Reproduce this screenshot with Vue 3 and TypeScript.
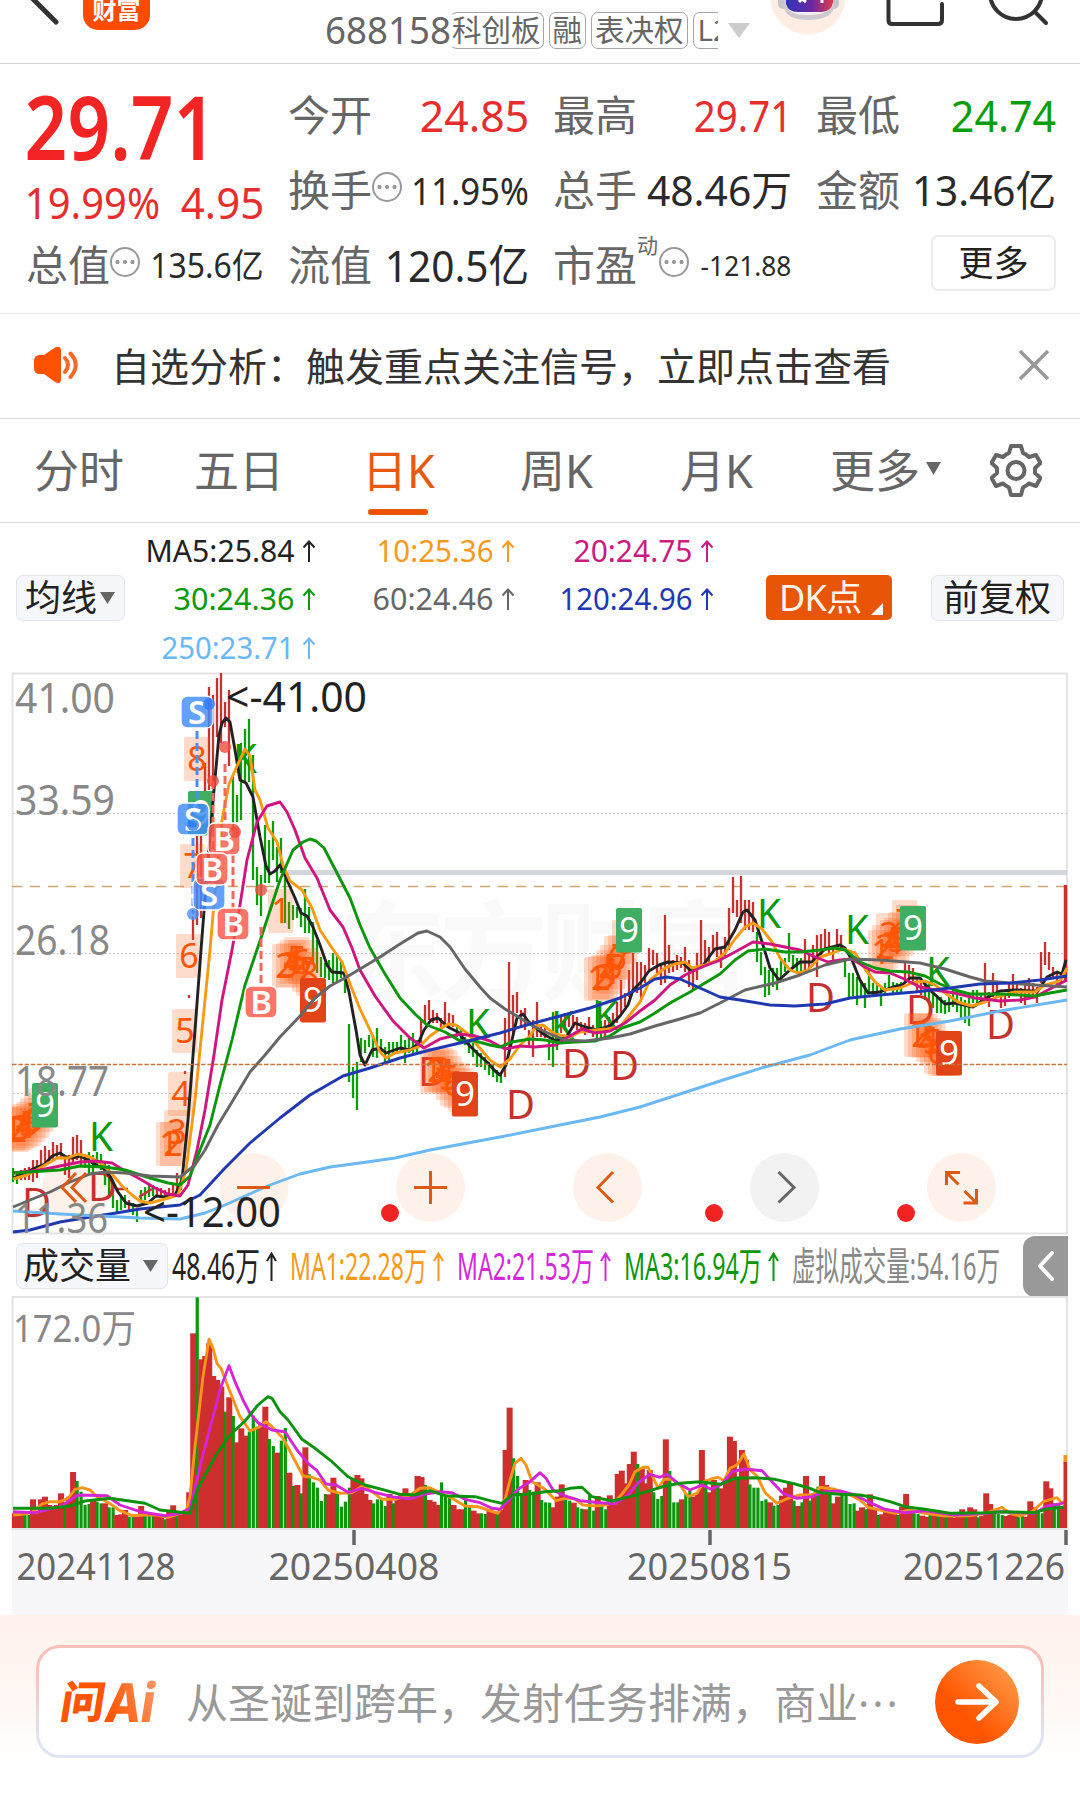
<script setup lang="ts">
import { h, type FunctionalComponent } from 'vue'

interface FitProps { t: string; s: number; w: number }

/* Single line of text condensed to a given ink width */
const Fit: FunctionalComponent<FitProps> = (p) =>
  h('svg', { width: p.w, height: p.s, style: 'overflow:visible;flex:none;display:block' }, [
    h('text', {
      x: -0.05 * p.s, y: 0.857 * p.s, 'font-size': p.s, fill: 'currentColor',
      textLength: p.w + 0.1 * p.s, lengthAdjust: 'spacingAndGlyphs',
    }, p.t),
  ])
Fit.props = ['t', 's', 'w']

const tabs = [
  { t: '分时' }, { t: '五日' }, { t: '日K', on: true },
  { t: '周K' }, { t: '月K' }, { t: '更多', menu: true },
]

const averages = [
  { t: 'MA5:25.84', w: 146, c: '#222' }, { t: '10:25.36', w: 114, c: '#f59a1c' }, { t: '20:24.75', w: 116, c: '#cb1a80' },
  { t: '30:24.36', w: 118, c: '#0a9a0a' }, { t: '60:24.46', w: 118, c: '#666' }, { t: '120:24.96', w: 130, c: '#2038b4' },
  { t: '250:23.71', w: 130, c: '#6bb8f5' },
]

const PITCH = 4.005
const X0 = 13

/* direction, high, low */
const candleData =
  'g1168-1182 g1171-1184 r1170-1180 r1168-1180 r1167-1180 r1160-1182 r1160-1178 r1150-1170 r1146-1165 r1150-1162 r1142-1160 r1145-1158 r1143-1158 r1155-1175 r1155-1178 r1137-1165 r1135-1160 r1140-1165 g1155-1168 g1152-1175 g1155-1175 g1152-1165 g1154-1170 g1162-1185 g1165-1196 g1190-1208 g1200-1212 g1197-1210 g1195-1208 r1200-1212 g1203-1215 g1210-1222 g1190-1200 g1187-1200 g1185-1197 g1185-1196 r1187-1197 r1188-1198 r1190-1198 r1188-1196 r1185-1195 r1173-1190 g1176-1190 r1071-1074 r995-998 r917-940 r827-925 r835-918 r763-810 r687-790 r695-787 r678-737 r673-743 r702-727 r690-766 g777-830 g795-822 g743-820 g729-782 g719-782 g755-880 g867-905 g875-916 g825-883 g840-883 g821-860 g847-882 g838-873 g878-923 g902-929 g905-920 g907-918 g908-927 g889-933 g907-933 g922-963 g940-973 g957-977 g963-978 g960-980 g953-983 g955-982 g962-978 g973-993 g1024-1082 g1067-1098 g1062-1110 g1038-1062 g1040-1053 g1035-1047 g1035-1057 g1028-1058 g1039-1053 g1047-1063 g1042-1060 g1042-1054 g1042-1053 g1035-1053 g1040-1063 g1038-1053 g1033-1053 g1040-1052 r1020-1043 r1005-1023 r1000-1020 r1010-1023 r1013-1023 r1018-1028 r1002-1025 r1013-1027 r1015-1027 g1027-1037 g1028-1040 g1037-1045 g1040-1053 g1043-1057 g1050-1067 g1053-1067 g1057-1070 g1062-1075 g1065-1077 g1070-1082 g1073-1083 r1018-1077 r962-1047 r995-1033 r992-1013 r1010-1027 r1008-1030 r1030-1047 r1020-1057 r1002-1037 r1025-1037 r1027-1038 g1040-1060 g1012-1067 g1037-1050 r1017-1033 r1013-1030 r1013-1027 r1015-1028 r1017-1030 r1022-1033 r1023-1035 r1017-1033 r1025-1037 g1000-1040 g1021-1040 r1020-1037 r1017-1030 r1013-1027 r1002-1023 r980-1013 r993-1007 r970-997 r953-993 r962-993 r962-1002 r965-983 r948-970 r950-965 r953-973 r963-985 r915-983 r945-973 r960-972 r955-970 r957-968 r947-972 r960-987 r968-990 r953-980 r920-967 r940-965 r947-963 r935-953 r932-957 r948-968 r937-958 r908-950 r877-913 r900-917 r876-923 r900-930 r900-930 r902-932 g932-962 g952-975 g967-997 g970-995 g968-987 g968-990 g960-980 g958-972 g933-962 g955-967 g958-972 g958-973 r939-970 r955-968 r945-963 r935-977 r934-957 r929-950 r932-953 r947-963 r929-950 r935-950 g958-977 g973-997 g973-996 g977-1005 g982-997 g983-1008 g968-993 g983-995 g985-995 g988-1006 g983-995 g975-990 g982-993 g983-992 g982-993 r963-983 r965-980 r968-983 r977-993 r980-995 g983-1000 g982-1003 g992-1008 g995-1013 g997-1013 g1000-1014 g997-1012 g990-1007 g993-1012 g997-1018 g1000-1023 g998-1026 g990-1003 g990-1003 g993-1003 r963-1000 r992-1007 r973-997 r982-997 r993-1008 r993-1006 r983-998 r974-995 r983-995 r988-1003 r983-1005 r978-998 r983-998 r987-1003 r952-983 r942-965 r952-970 r967-978 r972-987 r973-983'
const candles = candleData.split(' ').map((d, i) => {
  const [hi, lo] = d.slice(1).split('-').map(Number)
  return { up: d[0] === 'r', x: X0 + i * 4, hi, lo }
})

/* direction, distance of the bar top in thirds of a pixel */
const volumeData =
  'r850 r850 r850 g855 g855 r808 r850 r808 r800 r825 r830 r825 r790 g820 r800 r726 g753 g785 g825 g822 r812 g815 g820 r820 g832 g832 r855 r853 r840 g860 g858 r855 r828 g850 g853 g855 r858 r860 g868 r840 r826 g850 r850 r845 r787 r310 g202 r388 r378 r340 r438 r450 r470 g545 r502 g558 r637 r595 r617 g605 g557 g590 r580 r530 g627 g648 r668 g632 g594 r728 g768 r765 g790 r652 g733 g757 g773 g813 g792 r793 r743 g792 g830 g815 g773 r745 r735 r745 r792 r810 g820 g808 g806 g828 r792 g820 r800 r795 r775 r795 r795 r738 r741 g765 r810 r815 r825 g757 g800 g800 r825 r838 r838 g805 g828 r842 r850 g850 g852 r838 r845 g850 r840 r660 r533 g685 g738 g790 r750 g780 g785 r757 g810 g817 g818 r832 r800 r763 g808 g812 r818 g832 g836 r838 g793 g842 r798 g820 g838 r796 r815 r732 r722 r760 r702 r665 g702 r715 r760 r720 g787 g807 g798 r628 g723 g817 g817 r808 g790 g783 r800 r790 r660 g750 r787 r750 g760 r775 r750 r620 r633 g740 r660 r690 g763 g773 g773 g813 g808 r817 g827 g825 r797 r773 r757 g812 r828 g817 r738 g812 r790 g770 r738 r765 g790 r820 r800 g795 g797 g822 g820 r842 r832 g838 r793 r838 g855 r853 r845 r845 r850 g855 r830 r792 r847 g850 g852 r857 r860 g855 r855 g858 r858 g860 r855 r863 r858 r838 g860 r832 r838 g862 r858 r790 r822 g845 g852 g855 r858 r855 r856 g852 g858 r860 r814 r832 g845 g850 r754 r775 g820 g825 r830 r845'
const volumes = volumeData.split(' ').slice(0, 263).map((d, i) => {
  const top = Number(d.slice(1)) / 3
  const up = d[0] === 'r'
  return { up, x: X0 + i * PITCH - (up ? 3 : 1.6), w: up ? 6 : 3.2, y: top, hgt: 298 - top }
})

const priceLines = [
  { c: '#222', p: '13,1178 25,1173 35,1168 45,1164 52,1156 60,1153 66,1157 72,1158 80,1156 88,1160 96,1165 103,1168 110,1176 118,1192 126,1203 137,1206 148,1203 156,1196 165,1197 175,1195 182,1180 188,1120 195,1030 201,950 208,860 214,790 219,735 222,723 226,718 230,722 235,750 240,780 246,783 253,797 260,837 266,866 270,874 275,871 280,865 287,880 295,898 301,913 307,916 313,927 320,945 327,965 332,972 344,973 349,992 356,1030 360,1055 365,1065 372,1050 380,1048 386,1053 400,1048 410,1050 418,1044 424,1030 431,1020 438,1018 448,1027 458,1032 467,1043 477,1053 487,1062 495,1071 500,1075 506,1065 512,1040 517,1018 523,1014 528,1021 537,1029 545,1035 556,1041 567,1036 575,1023 585,1027 597,1030 610,1026 620,1016 628,1005 633,990 641,982 649,971 659,965 668,962 683,963 690,970 702,967 709,957 715,949 725,947 735,930 743,912 747,910 755,920 763,945 770,968 779,980 790,970 800,962 812,962 825,949 840,945 845,948 852,960 860,980 868,993 880,992 893,987 902,985 910,978 920,978 930,990 945,1004 955,1003 973,1007 988,997 1000,991 1015,990 1030,991 1038,991 1047,977 1057,972 1062,974 1066,960' },
  { c: '#f79a14', p: '13,1179 27,1175 40,1168 57,1158 68,1158 78,1154 90,1157 102,1164 112,1174 122,1186 132,1195 140,1201 150,1203 165,1199 178,1195 186,1170 195,1100 203,1020 210,950 216,880 222,820 229,784 237,766 245,749 250,756 255,790 260,800 268,828 277,842 283,865 290,881 302,890 312,908 320,930 332,948 342,962 350,984 360,1009 370,1030 380,1052 386,1058 395,1053 410,1050 420,1046 430,1036 440,1029 448,1024 456,1025 468,1034 478,1046 490,1060 500,1067 510,1059 520,1045 530,1036 536,1026 543,1025 548,1029 555,1034 570,1037 580,1032 595,1030 607,1029 620,1027 628,1017 640,1002 650,980 665,968 675,964 685,962 692,968 705,965 715,961 725,953 735,939 745,927 753,923 762,929 772,942 780,958 790,970 798,973 807,971 820,957 833,953 843,949 855,953 865,969 875,982 885,990 900,988 912,983 925,981 935,985 945,993 958,1002 972,1006 985,1002 1000,996 1015,992 1035,992 1045,985 1060,981 1067,968' },
  { c: '#cf1580', p: '13,1173 40,1170 60,1166 80,1162 95,1161 112,1163 125,1171 140,1179 155,1188 168,1194 180,1196 188,1185 197,1150 205,1110 214,1055 222,1000 232,950 240,905 247,860 257,822 267,806 280,802 287,812 295,830 305,858 317,878 330,910 343,927 352,948 360,970 375,996 393,1021 410,1038 424,1048 440,1039 460,1034 475,1036 490,1041 505,1049 520,1046 535,1047 556,1045 568,1037 582,1029 595,1033 610,1031 625,1023 640,1011 655,1000 670,985 685,975 702,967 718,961 735,952 753,942 770,944 785,947 800,950 815,957 828,962 840,960 852,959 865,967 875,972 890,973 902,978 920,987 935,990 955,993 975,998 1000,1001 1020,1000 1035,997 1048,990 1067,980' },
  { c: '#0a960a', p: '13,1173 60,1170 80,1166 105,1167 125,1170 150,1178 168,1183 180,1185 190,1176 200,1150 210,1125 220,1085 232,1040 245,985 262,935 280,880 293,850 303,842 310,839 316,841 324,848 337,873 350,898 360,925 370,948 385,974 400,998 415,1014 427,1025 445,1032 460,1041 475,1041 490,1045 500,1047 512,1042 530,1039 545,1040 560,1043 575,1042 595,1041 610,1036 622,1028 640,1022 655,1013 670,1003 690,992 705,983 720,974 735,960 748,951 765,949 785,952 800,952 820,950 835,948 845,950 860,962 875,968 890,971 908,972 925,976 940,984 955,990 970,994 1000,994 1035,996 1050,993 1067,990' },
  { c: '#666', p: '13,1207 30,1200 50,1192 70,1182 90,1174 105,1172 125,1173 150,1176 180,1177 195,1165 205,1150 218,1125 232,1102 250,1072 265,1055 280,1037 300,1016 315,998 330,986 345,978 360,969 380,957 400,944 418,933 427,931 440,937 450,947 465,969 480,987 490,998 505,1009 520,1018 535,1027 550,1034 565,1040 585,1041 610,1038 630,1034 655,1026 680,1019 700,1013 720,1003 745,990 775,983 800,975 825,965 850,959 880,960 920,963 945,969 970,977 985,981 1010,983 1035,985 1067,987' },
  { c: '#2038b0', p: '13,1232 30,1230 60,1222 90,1217 110,1214 140,1209 180,1205 200,1195 225,1168 250,1143 280,1118 310,1095 343,1076 370,1068 400,1058 430,1050 460,1043 500,1033 530,1024 560,1016 590,1008 620,998 640,988 655,979 667,977 680,979 700,988 720,997 740,1000 770,1005 795,1006 825,1004 850,998 880,995 915,992 950,988 980,984 1010,983 1040,980 1067,976' },
  { c: '#6bb8f3', p: '13,1211 60,1214 100,1216 140,1218 180,1219 205,1213 225,1205 245,1196 270,1185 300,1174 330,1167 360,1163 395,1158 430,1150 500,1137 560,1125 600,1117 640,1107 680,1094 720,1081 765,1067 810,1055 850,1040 900,1029 950,1021 1000,1011 1067,1000' },
]

const thirds = (p: string) =>
  p.split(' ').map((q) => {
    const [x, y] = q.split(',').map(Number)
    return `${x},${(y / 3).toFixed(1)}`
  }).join(' ')

const volumeLines = [
  { c: '#f7941a', p: thirds('13,855 25,852 33,845 42,822 50,815 60,815 68,805 75,778 82,773 90,780 97,800 105,812 112,825 120,842 132,857 145,855 157,855 168,862 178,852 186,845 190,800 195,650 203,440 209,328 213,355 217,400 221,415 228,470 234,515 240,560 250,603 260,590 266,575 272,590 283,625 292,675 303,738 312,742 320,750 328,780 340,790 352,788 364,765 372,785 382,808 395,808 410,795 420,775 430,773 440,788 452,805 465,828 478,830 488,840 498,850 504,820 510,750 515,700 521,685 526,705 532,755 538,765 545,778 556,812 565,805 574,805 583,825 595,828 605,825 614,818 622,792 629,765 635,725 643,712 648,712 652,735 658,775 664,748 672,748 680,765 688,800 697,790 704,755 713,745 718,742 724,752 730,715 737,705 744,672 750,720 757,738 765,788 777,820 788,805 800,795 813,795 820,772 835,778 850,795 860,810 868,832 880,840 895,850 910,840 925,850 945,858 970,857 985,850 1002,832 1010,850 1020,858 1032,845 1043,815 1057,803 1062,820 1066,815') },
  { c: '#d426d4', p: thirds('13,845 35,848 60,830 78,795 107,797 120,825 140,845 165,857 180,850 190,835 196,760 205,650 213,560 221,470 229,407 235,455 243,510 250,550 258,578 272,600 285,605 297,660 308,700 317,722 326,762 336,765 348,787 362,775 375,787 395,802 410,806 425,792 440,785 452,788 465,808 480,818 492,835 500,838 508,812 518,778 530,755 540,728 546,745 553,780 565,798 580,812 600,818 615,822 628,795 638,758 650,733 660,742 667,732 677,758 690,780 702,765 711,778 722,762 732,725 745,717 762,722 772,755 783,790 797,805 812,800 825,785 840,783 855,795 870,818 885,838 905,848 925,842 955,855 985,850 1000,845 1035,850 1047,828 1060,822 1066,815') },
  { c: '#0c920c', p: thirds('13,835 50,835 70,828 85,813 110,805 145,820 160,840 190,850 196,790 205,735 217,670 230,615 245,573 258,525 268,500 272,505 280,545 288,570 302,628 315,655 332,695 348,740 365,765 382,778 400,793 415,795 430,782 445,797 475,800 490,812 502,820 512,795 530,792 545,785 560,782 570,775 582,772 592,800 612,813 630,800 650,782 665,768 680,760 700,755 720,763 735,745 755,743 775,748 795,762 810,775 820,788 840,793 860,795 875,803 890,815 905,830 925,838 950,850 985,848 1005,845 1035,848 1045,838 1066,830') },
]

/* x, y of the nine-turn counters */
const counts: { n: number; x: number; y: number }[] = []
const runs: { x: number; ys: number[] }[] = [
  { x: 0, ys: [1107, 1108, 1106, 1104, 1102, 1098, 1094, 1088] },
  { x: 156, ys: [1122, 1122, 1110, 1072, 1009, 934, 844, 737] },
  { x: 268, ys: [889, 944, 943, 940, 937, 940, 948, 952] },
  { x: 420, ys: [1050, 1048, 1048, 1050, 1056, 1062, 1064, 1068] },
  { x: 584, ys: [957, 956, 955, 950, 945, 936, 935, 920] },
  { x: 868, ys: [930, 925, 913, 920, 918, 912, 900, 905] },
  { x: 904, ys: [1013, 1013, 1014, 1018, 1020, 1030, 1032, 1032] },
]
for (const r of runs) r.ys.forEach((y, i) => counts.push({ n: i + 1, x: r.x + i * 4, y }))

const nines = [
  { x: 32, y: 1083, c: '#3fae63' }, { x: 188, y: 791, c: '#3fae63' }, { x: 300, y: 978, c: '#e24417' },
  { x: 452, y: 1072, c: '#e24417' }, { x: 616, y: 908, c: '#3fae63' }, { x: 900, y: 906, c: '#3fae63' },
  { x: 936, y: 1031, c: '#e24417' },
]

const kd = [
  ['K', 89, 1151], ['K', 233, 773], ['K', 466, 1038], ['K', 551, 1040], ['K', 594, 1030], ['K', 757, 928],
  ['K', 845, 944], ['K', 926, 986], ['D', 22, 1217], ['D', 88, 1201], ['D', 418, 1086], ['D', 562, 1078],
  ['D', 610, 1080], ['D', 506, 1119], ['D', 806, 1012], ['D', 906, 1024], ['D', 986, 1039],
] as [string, number, number][]

const trades = [
  { t: 'S', x: 181, y: 696 }, { t: 'S', x: 177, y: 803 }, { t: 'S', x: 193, y: 878 },
  { t: 'B', x: 208, y: 823 }, { t: 'B', x: 196, y: 853 }, { t: 'B', x: 217, y: 908 }, { t: 'B', x: 245, y: 986 },
]
const links = [
  { x: 197, a: 731, b: 803, c: '#4c8df5' }, { x: 193, a: 838, b: 914, c: '#4c8df5' },
  { x: 225, a: 764, b: 823, c: '#f4685a' }, { x: 213, a: 781, b: 852, c: '#f4685a' },
  { x: 233, a: 855, b: 908, c: '#f4685a' }, { x: 261, a: 927, b: 986, c: '#f4685a' },
]
const dots = [
  { x: 209, y: 704, c: '#2f7df6' }, { x: 193, y: 825, c: '#2f7df6' }, { x: 193, y: 914, c: '#4c8df5' },
  { x: 225, y: 747, c: '#f04a3c' }, { x: 213, y: 781, c: '#f04a3c' }, { x: 261, y: 890, c: '#f04a3c' },
  { x: 235, y: 832, c: '#f04a3c' },
]

const scale = [
  { t: '41.00', y: 713, w: 97 }, { t: '33.59', y: 815, w: 97 }, { t: '26.18', y: 955, w: 92 },
  { t: '18.77', y: 1095.5, w: 91 }, { t: '11.36', y: 1232.5, w: 90 },
]
</script>

<template>
  <main class="page">
    <header class="top">
      <svg class="back" width="60" height="30" viewBox="0 0 60 30"><path d="M28-6 L56 22" stroke="#333" stroke-width="5" stroke-linecap="round" /></svg>
      <div class="brand">财富</div>
      <div class="code"><Fit t="688158" :s="38" :w="122" /></div>
      <div class="tags">
        <span class="tag first">科创板</span><span class="tag">融</span><span class="tag">表决权</span><span class="tag cut">L2</span>
      </div>
      <svg class="caret" width="22" height="15" viewBox="0 0 22 15"><path d="M0 0H22L11 15Z" fill="#ccc" /></svg>
      <svg class="robot" width="76" height="36" viewBox="0 0 76 36">
        <circle cx="38" cy="-3" r="37.5" fill="#ffede4" />
        <rect x="8" y="-8" width="12" height="17" rx="5" fill="#c9c4cc" />
        <rect x="57" y="-8" width="12" height="17" rx="5" fill="#c9c4cc" />
        <path d="M14-6V8Q17 20 38 20Q60 20 64 8V-6Z" fill="#cdc9ce" />
        <path d="M16-6V5Q18 15 38 15Q58 15 63 5V-6Z" fill="#f3eff2" />
        <defs><linearGradient id="visor" x1="0" x2="1"><stop offset="0" stop-color="#2f35b9" /><stop offset=".55" stop-color="#6a2aa0" /><stop offset="1" stop-color="#e23a4c" /></linearGradient></defs>
        <path d="M16-8V4Q18 12 28 12H52Q62 11 63 2V-8Z" fill="url(#visor)" />
        <path d="M29 2L32-1L36 2M52-2V3" stroke="#fff" stroke-width="3" fill="none" />
      </svg>
      <svg class="share" width="60" height="28" viewBox="0 0 60 28"><path d="M2.500-4V20Q2.500 24 6 24H52Q56 24 56 20V4" fill="none" stroke="#333" stroke-width="4" stroke-linecap="round" /><path d="M29-4V0" stroke="#777" stroke-width="3" /></svg>
      <svg class="search" width="60" height="28" viewBox="0 0 60 28"><circle cx="27" cy="-7" r="26" fill="none" stroke="#333" stroke-width="4" /><path d="M46 12L57 23" stroke="#333" stroke-width="4" stroke-linecap="round" /></svg>
    </header>

    <section class="quote">
      <div class="price">
        <div class="last"><Fit t="29.71" :s="88" :w="183" /></div>
        <div class="delta"><Fit t="19.99%" :s="43" :w="131" /><Fit t="4.95" :s="43" :w="79" /></div>
      </div>
      <div class="cell"><span>今开</span><Fit class="up" t="24.85" :s="44" :w="105" /></div>
      <div class="cell"><span>最高</span><Fit class="up" t="29.71" :s="44" :w="94" /></div>
      <div class="cell"><span>最低</span><Fit class="down" t="24.74" :s="44" :w="101" /></div>
      <div class="cell"><span>换手</span><i class="info"></i><Fit class="val" t="11.95%" :s="38" :w="114" /></div>
      <div class="cell"><span>总手</span><Fit class="val" t="48.46万" :s="42" :w="141" /></div>
      <div class="cell"><span>金额</span><Fit class="val" t="13.46亿" :s="42" :w="140" /></div>
      <div class="cell"><span>总值</span><i class="info"></i><Fit class="val" t="135.6亿" :s="34" :w="110" /></div>
      <div class="cell"><span>流值</span><Fit class="val" t="120.5亿" :s="44" :w="140" /></div>
      <div class="cell"><span>市盈</span><sup>动</sup><i class="info"></i><Fit class="val" t="-121.88" :s="28" :w="88" /></div>
      <div class="cell"><button class="more">更多</button></div>
    </section>

    <section class="notice">
      <svg width="46" height="38" viewBox="0 0 46 38">
        <path d="M1 15Q1 9 7 9H11L22 1.500Q28-1 28 5V33Q28 39 22 36L11 28H7Q1 28 1 22Z" fill="#ff5200" />
        <path d="M32 12Q38 18.500 32 26M37.500 7.500Q48 18.500 37.500 31" fill="none" stroke="#f96a28" stroke-width="4" stroke-linecap="round" />
      </svg>
      <p>自选分析：触发重点关注信号，立即点击查看</p>
      <svg width="32" height="32" viewBox="0 0 32 32"><path d="M2 2L30 30M30 2L2 30" stroke="#999" stroke-width="3.500" /></svg>
    </section>

    <nav class="tabs">
      <div v-for="t in tabs" :key="t.t" class="tab" :class="{ on: t.on, menu: t.menu }">
        {{ t.t }}<svg v-if="t.menu" width="15" height="13" viewBox="0 0 15 13"><path d="M0 0H15L7.500 13Z" fill="#666" /></svg>
      </div>
      <svg class="gear" width="52" height="54" viewBox="-26 -27 52 54">
        <path d="M-5-24H5L7-17Q10-16 13-13L20-15L24.500-7L19-2Q19 0 19 3L24.500 8L20 16L13 13.500Q10 16 7 17.500L5 25H-5L-7 17.500Q-10 16 -13 13.500L-20 16L-24.500 8L-19 3Q-19 0 -19-2L-24.500-7L-20-15L-13-13Q-10-16 -7-17Z" fill="none" stroke="#666" stroke-width="4" stroke-linejoin="round" />
        <circle cx="0" cy="0.500" r="8.500" fill="none" stroke="#666" stroke-width="4" />
      </svg>
    </nav>

    <section class="averages">
      <button class="chip">均线<svg width="15" height="12" viewBox="0 0 15 12"><path d="M0 0H15L7.500 12Z" fill="#666" /></svg></button>
      <div class="ma-grid">
        <div v-for="a in averages" :key="a.t" class="ma" :style="{ color: a.c }">
          <Fit :t="a.t" :s="30" :w="a.w" />
          <svg width="12" height="22" viewBox="0 0 12 22"><path d="M6 22V2M0.500 7.500L6 1.500L11.500 7.500" fill="none" stroke="currentColor" stroke-width="2" /></svg>
        </div>
      </div>
      <button class="dk">DK点<i></i></button>
      <button class="chip restore">前复权</button>
    </section>

    <svg class="kline" width="1080" height="564" viewBox="0 672 1080 564">
      <defs><clipPath id="plot"><rect x="12" y="672" width="1056" height="563" /></clipPath></defs>
      <text class="mark" x="338" y="992" textLength="412">东方财富</text>
      <g fill="none">
        <rect x="12.500" y="673.500" width="1054.500" height="560" stroke="#e3e3e3" stroke-width="2" />
        <path d="M13 813.500H1067M13 953.500H1067M13 1093.500H1067" stroke="#ccc" stroke-width="1" stroke-dasharray="2 2" />
      </g>
      <path d="M288 872.500H1067" stroke="#d3d7db" stroke-width="5" />
      <path d="M12 886.500H1067" stroke="#cfa46e" stroke-width="1.500" stroke-dasharray="10 8" />
      <g>
        <circle v-for="x in [77, 254, 430.500, 607.500, 961.500]" :key="x" :cx="x" cy="1187.500" r="34.500" fill="#fef1ea" />
        <circle cx="784.500" cy="1187.500" r="34.500" fill="#f2f2f2" />
      </g>
      <g clip-path="url(#plot)">
        <path v-for="c in candles" :key="c.x" :d="`M${c.x} ${c.hi}V${c.lo}`" :stroke="c.up ? '#c93030' : '#0a9e0a'" stroke-width="2.300" />
        <path d="M1065.500 885V980" stroke="#c93030" stroke-width="3.500" />
        <path d="M118 1189H128M139 1197L152 1189" stroke="#c93030" stroke-width="2.500" />
        <g class="kd">
          <text v-for="(k, i) in kd" :key="i" :x="k[1]" :y="k[2]" :textLength="k[0] === 'K' ? 24 : 29" lengthAdjust="spacingAndGlyphs" :fill="k[0] === 'K' ? '#0a9a0a' : '#c53030'">{{ k[0] }}</text>
        </g>
        <g class="cnt">
          <template v-for="(c, i) in counts" :key="i">
            <rect :x="c.x" :y="c.y" width="25.500" height="44" rx="2" fill="#ff5a10" fill-opacity=".22" />
            <text :x="c.x + 13" :y="c.y + 34">{{ c.n }}</text>
          </template>
        </g>
        <g class="nine">
          <template v-for="n in nines" :key="n.x">
            <rect :x="n.x" :y="n.y" width="26" height="44.500" rx="2" :fill="n.c" />
            <text :x="n.x + 13" :y="n.y + 34">9</text>
          </template>
        </g>
        <polyline v-for="l in priceLines" :key="l.c" :points="l.p" fill="none" :stroke="l.c" stroke-width="2.900" stroke-linejoin="round" />
        <path d="M12 1064.500H1067" stroke="#c9733f" stroke-width="1.500" stroke-dasharray="4.500 1.800" />
        <path v-for="k in links" :key="k.x + k.c" :d="`M${k.x} ${k.a}V${k.b}`" :stroke="k.c" stroke-width="3" stroke-dasharray="8 4" />
        <g class="trade">
          <template v-for="b in trades" :key="b.x">
            <rect :x="b.x" :y="b.y" width="32" height="32" rx="6.500" :fill="b.t === 'S' ? '#3f8cff' : '#fb5748'" fill-opacity=".82" stroke="#fff" stroke-width="1.300" />
            <text :x="b.x + 16" :y="b.y + 27.500">{{ b.t }}</text>
          </template>
        </g>
        <circle v-for="(d, i) in dots" :key="i" :cx="d.x" :cy="d.y" r="6" :fill="d.c" fill-opacity=".8" />
      </g>
      <g class="scale">
        <text v-for="s in scale" :key="s.t" x="15" :y="s.y" :textLength="s.w + 3" lengthAdjust="spacingAndGlyphs">{{ s.t }}</text>
      </g>
      <g class="peak">
        <text x="226" y="711.500" textLength="141" lengthAdjust="spacingAndGlyphs">&lt;-41.00</text>
        <text x="143" y="1227" textLength="138" lengthAdjust="spacingAndGlyphs">&lt;-12.00</text>
      </g>
      <circle v-for="x in [390, 714, 906]" :key="x" :cx="x" cy="1213" r="9" fill="#f02323" />
      <g fill="none" stroke="#dc5a12" stroke-width="3">
        <path d="M76 1173L62 1187.500L76 1202M86 1173L72 1187.500L86 1202" />
        <path d="M237 1187.500H270" />
        <path d="M414 1187.500H447M430.500 1171V1204" />
        <path d="M613 1172L598 1187.500L613 1202.500" />
        <path d="M778.500 1172L794 1187.500L778.500 1202.500" stroke="#666" />
        <path d="M960 1172.500H946.500V1185M947 1173L958.500 1184.500M963.500 1203H976.500V1189M976 1202.500L964.500 1191" />
      </g>
    </svg>

    <section class="vol-head">
      <button class="chip">成交量<svg width="15" height="12" viewBox="0 0 15 12"><path d="M0 0H15L7.500 12Z" fill="#666" /></svg></button>
      <div class="vi" style="color: #222"><Fit t="48.46万" :s="39" :w="84" /><svg width="11" height="29" viewBox="0 0 11 29"><path d="M5.500 29V2M1 9L5.500 1.500L10 9" fill="none" stroke="currentColor" stroke-width="2" /></svg></div>
      <div class="vi" style="color: #f59a1c"><Fit t="MA1:22.28万" :s="39" :w="133" /><svg width="11" height="29" viewBox="0 0 11 29"><path d="M5.500 29V2M1 9L5.500 1.500L10 9" fill="none" stroke="currentColor" stroke-width="2" /></svg></div>
      <div class="vi" style="color: #d22ad8"><Fit t="MA2:21.53万" :s="39" :w="133" /><svg width="11" height="29" viewBox="0 0 11 29"><path d="M5.500 29V2M1 9L5.500 1.500L10 9" fill="none" stroke="currentColor" stroke-width="2" /></svg></div>
      <div class="vi" style="color: #0a960a"><Fit t="MA3:16.94万" :s="39" :w="134" /><svg width="11" height="29" viewBox="0 0 11 29"><path d="M5.500 29V2M1 9L5.500 1.500L10 9" fill="none" stroke="currentColor" stroke-width="2" /></svg></div>
      <div class="vi" style="color: #888"><Fit t="虚拟成交量:54.16万" :s="39" :w="204" /></div>
      <div class="fold"><svg width="18" height="30" viewBox="0 0 18 30"><path d="M15 2L3 15L15 28" fill="none" stroke="#fff" stroke-width="4" stroke-linecap="round" stroke-linejoin="round" /></svg></div>
    </section>

    <svg class="volume" width="1080" height="234" viewBox="0 66 1080 234">
      <rect x="12.500" y="67" width="1054.500" height="232" fill="none" stroke="#e3e3e3" stroke-width="2" />
      <text x="13" y="112" font-size="39" fill="#888" textLength="123" lengthAdjust="spacingAndGlyphs">172.0万</text>
      <rect v-for="(v, i) in volumes" :key="i" :x="Math.max(12, v.x)" :y="v.y" :width="v.w" :height="v.hgt" :fill="v.up ? '#ce2e2e' : '#0c960c'" />
      <polyline v-for="l in volumeLines" :key="l.c" :points="l.p" fill="none" :stroke="l.c" stroke-width="2.900" stroke-linejoin="round" />
      <rect x="1063.500" y="225" width="3.500" height="8" fill="#f7941a" />
      <rect x="1063.500" y="232" width="3.500" height="66" fill="#ce2e2e" />
    </svg>

    <section class="axis">
      <svg width="1056" height="84" viewBox="12 1531 1056 84">
        <path d="M354 1531V1546M710 1531V1546M1066 1531V1546" stroke="#666" stroke-width="3.500" />
        <g font-size="38" fill="#666">
          <text x="16.500" y="1581" textLength="159" lengthAdjust="spacingAndGlyphs">20241128</text>
          <text x="268.500" y="1581" textLength="171" lengthAdjust="spacingAndGlyphs">20250408</text>
          <text x="627" y="1581" textLength="165" lengthAdjust="spacingAndGlyphs">20250815</text>
          <text x="903" y="1581" textLength="162" lengthAdjust="spacingAndGlyphs">20251226</text>
        </g>
      </svg>
    </section>

    <footer class="ask">
      <div class="box">
        <svg class="logo" width="100" height="50" viewBox="0 0 100 50">
          <defs><linearGradient id="ai" gradientUnits="userSpaceOnUse" x1="50" y1="-8" x2="98" y2="-30"><stop offset="0" stop-color="#ff5400" /><stop offset="1" stop-color="#ff9a66" /></linearGradient></defs>
          <g transform="translate(-2 45) skewX(-9)">
            <text class="wen" x="0" y="-4">问</text>
            <text class="ai" x="46" y="0" textLength="49" lengthAdjust="spacingAndGlyphs" fill="url(#ai)">Ai</text>
          </g>
        </svg>
        <p>从圣诞到跨年，发射任务排满，商业<span>···</span></p>
        <div class="send"><svg width="46" height="40" viewBox="0 0 46 40"><path d="M4 20H42M25 4L42 20L25 36" fill="none" stroke="#fff" stroke-width="5.500" stroke-linecap="round" stroke-linejoin="round" /></svg></div>
      </div>
    </footer>
  </main>
</template>

<style>
body { margin: 0; background: #fff; }
</style>

<style scoped>
.page { width: 1080px; height: 1799px; overflow: hidden; background: #fff; color: #333; font-family: "Noto Sans", "Noto Sans CJK SC", sans-serif; }
svg { display: block; flex: none; }
button { font-family: inherit; padding: 0; margin: 0; box-sizing: border-box; background: none; border: 0; color: #222; }
p { margin: 0; }

.top { height: 63px; border-bottom: 1px solid #d6d6d6; display: flex; align-items: flex-start; overflow: hidden; }
.brand { margin-left: 23px; width: 67px; height: 30px; border-radius: 0 0 15px 15px; background: #ff4b00; color: #fff; font-weight: 700; font-size: 24px; line-height: 20px; text-align: center; }
.code { margin: 11px 0 0 177px; color: #666; width: 122px; }
.tags { display: flex; gap: 5px; margin: 12px 0 0 1px; width: 268px; overflow: hidden; }
.tag { box-sizing: border-box; height: 37px; border: 1.5px solid #a5a5a5; border-radius: 7px; padding: 0 3px; font-size: 29.500px; line-height: 33px; color: #666; white-space: nowrap; flex: none; }
.tag.first { border-left-color: transparent; padding: 0 2px 0 1px; }
.tag.cut { padding-left: 4px; }
.caret { margin: 23px 0 0 10px; }
.robot { margin-left: 20px; }
.share { margin-left: 40px; }
.search { margin-left: 43px; }

.quote { padding: 14px 26px 0 28px; border-bottom: 1px solid #ececec; box-sizing: border-box; height: 250px; display: grid; grid-template-columns: 234px 237px 235px 236px; grid-template-rows: 75px 75px 75px; column-gap: 28px; }
.price { grid-row: span 2; display: flex; flex-direction: column; }
.last { margin: 7px 0 0 1px; color: #f22424; font-weight: 600; }
.delta { display: flex; justify-content: space-between; color: #e62e2e; margin: 9px 0 0 -1px; }
.cell { display: flex; align-items: center; color: #666; font-size: 42px; line-height: 60px; white-space: nowrap; }
.cell > :first-child:not(.more) { margin-left: -2px; }
.cell > :last-child { margin-left: auto; }
.cell .up { color: #e62e2e; }
.cell .down { color: #0a9e0a; }
.cell .val { color: #2a2a2a; }
.cell span { margin-top: -1px; }
.cell sup { font-size: 21px; line-height: 24px; align-self: flex-start; margin-top: 5px; width: 22px; }
.info { width: 30px; height: 30px; box-sizing: border-box; border: 2px solid #999; border-radius: 50%; margin-top: -7px; display: block; background: radial-gradient(circle at 5.500px 13px, #999 1.800px, transparent 2.300px), radial-gradient(circle at 13px 13px, #999 1.800px, transparent 2.300px), radial-gradient(circle at 20.500px 13px, #999 1.800px, transparent 2.300px); }
.more { width: 125px; height: 56px; border: 2px solid #ebebeb; border-radius: 7px; font-size: 35px; line-height: 48px; margin-top: -5px; position: relative; left: 2px; }

.notice { height: 105px; box-sizing: border-box; border-bottom: 1px solid #d9d9d9; display: flex; align-items: center; padding: 0 30px 2px 33px; }
.notice p { font-size: 39px; margin: -2px 0 0 32px; flex: 1; color: #333; white-space: nowrap; }

.tabs { height: 104px; box-sizing: border-box; border-bottom: 1px solid #d9d9d9; display: flex; align-items: center; padding-left: 34px; font-size: 45px; color: #666; }
.tab { height: 104px; line-height: 108px; box-sizing: border-box; margin-right: 68px; display: flex; align-items: center; white-space: nowrap; width: 92px; flex: none; }
.tab:nth-child(3) { margin-left: 8px; }
.tab.on { color: #e65a10; position: relative; width: 70px; margin-right: 88px; }
.tab.on::after { content: ""; position: absolute; left: 6px; top: 90px; width: 60px; height: 6px; border-radius: 3px; background: #e85400; }
.tab:nth-child(4), .tab:nth-child(5) { width: 80px; margin-right: 80px; }
.tab:nth-child(5) { margin-right: 70px; }
.tab.menu { width: 120px; margin-right: 40px; }
.tab.menu svg { margin: -4px 0 0 6px; }
.gear { margin-top: -2px; }

.averages { height: 149px; display: flex; align-items: center; }
.chip { height: 46px; border: 1.5px solid #e2e4ea; border-radius: 7px; background: #f6f7fa; font-size: 36px; line-height: 42px; display: flex; align-items: center; white-space: nowrap; }
.averages .chip { width: 109px; margin-left: 16px; padding-left: 8px; }
.averages .chip svg { margin-left: 3px; }
.averages .restore { width: 133px; margin-left: 39px; padding-left: 11px; }
.ma-grid { display: grid; grid-template-columns: 190px 199px 199px; grid-auto-rows: 48.500px; width: 588px; padding-top: 3px; }
.ma { display: flex; justify-content: flex-end; align-items: center; gap: 10px; }
.dk { width: 126px; height: 45px; margin-left: 53px; border-radius: 5px; background: #e95506; color: #fff4ec; font-size: 36px; line-height: 45px; display: flex; align-items: center; padding-left: 13px; white-space: nowrap; letter-spacing: -0.700px; }
.dk i { width: 0; height: 0; border-left: 12px solid transparent; border-bottom: 12px solid #fff; margin: 22px 0 0 10px; }

.kline { height: 564px; overflow: hidden; }
.mark { font-size: 108px; font-weight: 700; fill: #f9f9f9; font-family: "Noto Sans CJK SC", sans-serif; }
.scale { font-size: 41px; fill: #888; }
.kd { font-size: 40px; }
.cnt { font-size: 34px; fill: #ff5500; text-anchor: middle; }
.nine { font-size: 35px; fill: #fff; text-anchor: middle; }
.trade { font-size: 33px; font-weight: 600; fill: #fff; text-anchor: middle; }
.peak { font-size: 41px; fill: #222; }

.vol-head { height: 60px; display: flex; align-items: center; padding-left: 16px; }
.vol-head .chip { width: 152px; padding-left: 6px; margin-right: 6px; flex: none; }
.vol-head .chip svg { margin-left: auto; margin-right: 9px; }
.vi { display: flex; align-items: center; gap: 8px; margin-right: 15px; flex: none; }
.vi:last-of-type { margin-right: 0; }
.fold { width: 45px; height: 61px; margin-left: auto; margin-right: 12px; border-radius: 12px 0 0 12px; background: #999; display: flex; align-items: center; justify-content: center; }

.axis { margin: 0 12px; height: 85px; background: #f7f7fa; }

.ask { height: 184px; box-sizing: border-box; padding: 30px 36px 0; background: linear-gradient(#fff1ec, #fff9f5 55%, #fff 82%); }
.box { height: 113px; box-sizing: border-box; border: 3px solid transparent; border-radius: 24px; background: linear-gradient(#fff, #fff) padding-box, linear-gradient(#f9c0b9 20%, #dfe5f3 85%) border-box; display: flex; align-items: center; padding: 0 22px 0 21px; }
.logo { overflow: visible; }
.box p { flex: 1; margin: 2px 0 0 26px; font-size: 42px; color: #999; white-space: nowrap; line-height: 60px; }
.box p span { letter-spacing: 3px; }
.wen { font: 900 44px "Noto Sans CJK SC", sans-serif; fill: #ff5400; }
.ai { font: 800 54px "Noto Sans", sans-serif; }
.send { width: 84px; height: 84px; border-radius: 50%; background: linear-gradient(45deg, #ff5500 35%, #ff9340 85%); display: flex; align-items: center; justify-content: center; }
</style>
